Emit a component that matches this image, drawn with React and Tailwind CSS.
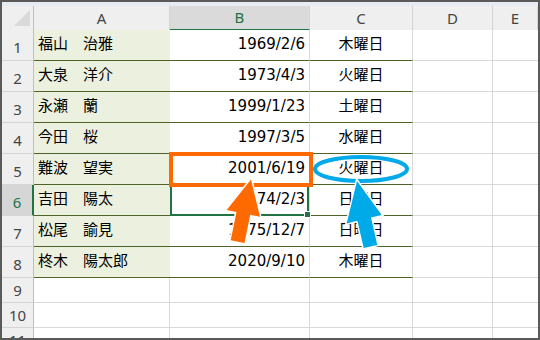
import React from "react";

const rows = [
  ["福山\u3000治雅", "1969/2/6", "木曜日"],
  ["大泉\u3000洋介", "1973/4/3", "火曜日"],
  ["永瀬\u3000蘭", "1999/1/23", "土曜日"],
  ["今田\u3000桜", "1997/3/5", "水曜日"],
  ["難波\u3000望実", "2001/6/19", "火曜日"],
  ["吉田\u3000陽太", "1974/2/3", "日曜日"],
  ["松尾\u3000諭見", "1975/12/7", "日曜日"],
  ["柊木\u3000陽太郎", "2020/9/10", "木曜日"],
];

const cellFont = "font-['DejaVu_Sans','Noto_Sans_CJK_JP',sans-serif] text-[15px] text-black";
const hdrFont = "font-['Noto_Sans',sans-serif] text-[15px]";

function HeaderRow() {
  const letters = ["A", "B", "C", "D", "E"];
  return (
    <div className="grid grid-cols-[32px_136px_140px_103px_80px_1fr] h-[24px] shrink-0">
      <div className="flex items-end justify-end bg-[#efefef] border-r border-b border-[#bfbfbf] pr-[3px] pb-[4px]">
        <svg width="16" height="16" viewBox="0 0 16 16">
          <polygon points="16,0 16,16 0,16" fill="#d9d9d9" />
        </svg>
      </div>
      {letters.map((l) => {
        const sel = l === "B";
        return (
          <div
            key={l}
            className={
              "flex items-center justify-center border-r border-[#d4d4d4] " +
              hdrFont +
              (sel
                ? " bg-[#dadada] border-b-2 border-b-[#217346] text-[#217346]"
                : " bg-[#efefef] border-b border-b-[#bfbfbf] text-[#444444]")
            }
          >
            {l}
          </div>
        );
      })}
    </div>
  );
}

function DataRow({ n, name, date, day }) {
  const sel = n === 6;
  return (
    <div className="grid grid-cols-[32px_136px_140px_103px_80px_1fr] h-[31px] shrink-0">
      <div
        className={
          "flex items-center justify-center pt-[4px] border-b border-b-[#d4d4d4] " +
          hdrFont +
          (sel
            ? " bg-[#d6d6d6] text-[#217346] border-r-2 border-r-[#217346]"
            : " bg-[#efefef] text-[#444444] border-r border-r-[#bfbfbf]")
        }
      >
        {n}
      </div>
      <div className={"flex items-center pl-[4px] pb-[2px] bg-[#ebf1de] border-b border-[#4f6228] " + cellFont}>
        {name}
      </div>
      <div className={"relative flex items-center justify-end pr-[4px] pb-[1px] bg-white border-b border-b-[#4f6228] border-r border-r-[#d9d9d9] " + cellFont}>
        {date}
        {sel && (
          <div className="absolute left-0 -top-[1px] right-0 -bottom-[1px] border-2 border-[#217346] z-10">
            <div className="absolute -right-[4px] -bottom-[4px] w-[7px] h-[7px] bg-[#217346] border border-white" />
          </div>
        )}
      </div>
      <div className={"flex items-center justify-center pb-[2px] bg-white border-b border-b-[#4f6228] border-r border-r-[#d9d9d9] " + cellFont}>
        {day}
      </div>
      <div className="bg-white border-b border-r border-[#d9d9d9]" />
      <div className="bg-white border-b border-[#d9d9d9]" />
    </div>
  );
}

function EmptyRow({ n, h }) {
  return (
    <div className={"grid grid-cols-[32px_136px_140px_103px_80px_1fr] shrink-0 " + h}>
      <div className={"flex items-start justify-center pt-[1px] bg-[#efefef] text-[#444444] border-r border-r-[#bfbfbf] border-b border-b-[#d4d4d4] " + hdrFont}>
        {n}
      </div>
      <div className="bg-white border-b border-r border-[#d9d9d9]" />
      <div className="bg-white border-b border-r border-[#d9d9d9]" />
      <div className="bg-white border-b border-r border-[#d9d9d9]" />
      <div className="bg-white border-b border-r border-[#d9d9d9]" />
      <div className="bg-white border-b border-[#d9d9d9]" />
    </div>
  );
}

export default function App() {
  return (
    <div className="relative w-[540px] h-[340px] overflow-hidden">
      <div className="w-[540px] h-[340px] border-2 border-[#5a5a5a] bg-white flex flex-col overflow-hidden">
        <div className="h-[4px] bg-[#e8ecf0] shrink-0" />
        <HeaderRow />
        {rows.map((r, i) => (
          <DataRow key={i} n={i + 1} name={r[0]} date={r[1]} day={r[2]} />
        ))}
        <EmptyRow n={9} h="h-[25px]" />
        <EmptyRow n={10} h="h-[25px]" />
        <EmptyRow n={11} h="h-[25px]" />
      </div>

      {/* orange highlight box */}
      <div className="absolute left-[169px] top-[152px] w-[144px] h-[35px] border-4 border-[#ff6a00] z-20" />

      <svg className="absolute left-0 top-0 z-30" width="540" height="340" viewBox="0 0 540 340">
        <ellipse cx="361" cy="169" rx="46" ry="12" fill="none" stroke="#00a9e8" strokeWidth="4" />
        <polygon
          points="251,179.5 260,216.7 250.2,214.7 244.5,243.1 230.7,240.3 236.5,211.9 226.7,210"
          fill="#ff6a00"
          stroke="#ffffff"
          strokeWidth="3"
          paintOrder="stroke"
          strokeLinejoin="miter"
        />
        <polygon
          points="357,181 381.7,215 371,217.6 377.3,244.9 363.7,248.1 357.4,220.8 346.7,223.4"
          fill="#00a9e8"
          stroke="#ffffff"
          strokeWidth="3"
          paintOrder="stroke"
          strokeLinejoin="miter"
        />
      </svg>
    </div>
  );
}
